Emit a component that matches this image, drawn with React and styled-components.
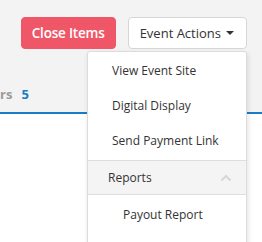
import React from 'react';
import styled, { createGlobalStyle } from 'styled-components';

const Global = createGlobalStyle`
  html, body { margin: 0; padding: 0; background: #fff; }
  body { font-family: "Open Sans", "Noto Sans", sans-serif; }
  * { box-sizing: border-box; }
`;

const Page = styled.div`
  position: relative;
  width: 262px;
  height: 242px;
  overflow: hidden;
  background: #fff;
`;

const Header = styled.div`
  height: 114px;
  background: #f3f3f3;
  border-bottom: 2px solid #1a7dc4;
  display: flex;
  flex-direction: column;
  justify-content: space-between;
  padding: 17px 15px 0 0;
`;

const Toolbar = styled.div`
  display: flex;
  justify-content: flex-end;
  gap: 12px;
`;

const Button = styled.button`
  height: 32px;
  padding: ${p => (p.$danger ? '0 10px' : '0 12px 0 11px')};
  border-radius: 4px;
  font-family: inherit;
  font-size: ${p => (p.$danger ? '13.5px' : '13px')};
  letter-spacing: ${p => (p.$danger ? '-0.2px' : '0')};
  display: flex;
  align-items: center;
  gap: 3px;
  cursor: pointer;
  background: ${p => (p.$danger ? '#ef5668' : '#fff')};
  color: ${p => (p.$danger ? '#fff' : '#333')};
  border: 1px solid ${p => (p.$danger ? '#ef5668' : '#d6d6d6')};
  font-weight: ${p => (p.$danger ? 600 : 400)};
`;

const Caret = styled.span`
  width: 0;
  height: 0;
  border-left: 4px solid transparent;
  border-right: 4px solid transparent;
  border-top: 4px solid #333;
  margin-left: 2px;
`;

const Tab = styled.div`
  display: flex;
  align-items: center;
  gap: 9px;
  height: 30px;
  padding-bottom: 6px;
  font-size: 13px;
  font-weight: 700;
  color: #9a9a9a;
`;

const Count = styled.span`
  color: #1a7dc4;
`;

const Menu = styled.div`
  position: absolute;
  top: 51px;
  left: 87px;
  width: 160px;
  height: 200px;
  background: #fff;
  border: 1px solid #dcdcdc;
  border-radius: 3px;
  box-shadow: 1px 2px 5px rgba(0, 0, 0, 0.12);
  padding-top: 1px;
`;

const Item = styled.div`
  height: 35px;
  display: flex;
  align-items: center;
  padding-left: ${p => p.$indent || 24}px;
  margin-top: ${p => (p.$sub ? '2px' : '0')};
  font-size: 12px;
  color: #333;
`;

const Group = styled.div`
  margin-top: 2px;
  height: 35px;
  display: flex;
  align-items: center;
  justify-content: space-between;
  padding: 0 14px 0 20px;
  background: #f4f4f4;
  border-top: 1px solid #dedede;
  border-bottom: 1px solid #dedede;
  font-size: 12px;
  color: #333;
`;

const Chevron = () => (
  <svg width="12" height="8" viewBox="0 0 12 8">
    <path d="M1.5 6.5 L6 2 L10.5 6.5" fill="none" stroke="#d8d8d8" strokeWidth="2.2" />
  </svg>
);

export default function App() {
  return (
    <Page>
      <Global />
      <Header>
        <Toolbar>
          <Button $danger>Close Items</Button>
          <Button>
            Event Actions <Caret />
          </Button>
        </Toolbar>
        <Tab>
          <span>rs</span>
          <Count>5</Count>
        </Tab>
      </Header>
      <Menu>
        <Item>View Event Site</Item>
        <Item>Digital Display</Item>
        <Item>Send Payment Link</Item>
        <Group>
          <span>Reports</span>
          <Chevron />
        </Group>
        <Item $indent={35} $sub>Payout Report</Item>
      </Menu>
    </Page>
  );
}
